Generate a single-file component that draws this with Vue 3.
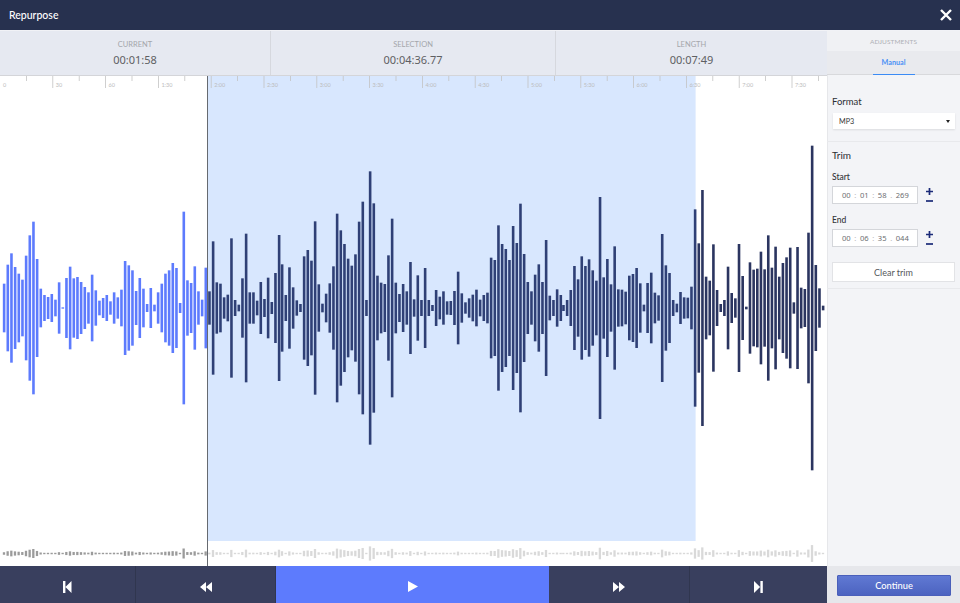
<script setup>
const seg1 = [73,130,164,123,103,85,157,218,259,147,58,39,33,42,25,77,2,90,124,89,93,78,63,47,100,53,22,30,39,20,47,32,55,141,128,113,51,90,58,12,60,10,47,73,103,113,135,120,15,289,83,75,125,50,25,121,50,200,77,73,32,40,209,24,10,89,223,47,47,22,78,27,91,18,105,219]
const seg2 = [131,39,122,62,23,12,155,174,142,260,71,13,43,74,125,283,233,192,148,127,161,259,319,24,410,314,97,76,72,158,268,76,42,72,50,138,26,98,24,120,24,9,54,34,50,20,21,51,109,44,17,29,40,55,25,39,46,151,144,248,192,177,144,246,195,313,162,78,50,100,131,78,204,37,24,56,39]
const seg3 = [9,24,54,126,86,155,126,146,113,82,333,92,147,71,185,56,55,49,97,102,120,74,10,75,106,46,38,222,128,105,24,13,48,32,31,64,296,194,354,94,82,191,54,12,24,124,45,29,192,96,4,137,115,118,169,116,218,121,184,94,135,152,181,17,183,61,57,226,487,129,59,7]
const colorOf = (x) => (x < 207 ? '#5d7bfd' : x < 696 ? '#2f4076' : '#2b3560')
const place = (list, from, to) => list.map((v, i) => {
  const x = from + (i * (to - from)) / (list.length - 1)
  return {
    x: x - 1.5,
    h: v / 3,
    fill: colorOf(x),
    mini: Math.max(0.7, (v / 3) * 0.052),
    miniFill: x < 207 ? '#9b9b9b' : '#d9d9d9',
  }
})
const bars = [...place(seg1, 4.33, 279.33), ...place(seg2, 282.33, 561), ...place(seg3, 563.67, 823.33)]
const labels = ['0','30','60','1:30','2:00','2:30','3:00','3:30','4:00','4:30','5:00','5:30','6:00','6:30','7:00','7:30']
const ticks = Array.from({ length: 32 }, (_, i) => ({ x: i * 26.4, major: i % 2 === 0 })).filter((t) => t.x > 0)
const stats = [
  { label: 'CURRENT', value: '00:01:58', cls: 'w1' },
  { label: 'SELECTION', value: '00:04:36.77', cls: 'w2' },
  { label: 'LENGTH', value: '00:07:49', cls: 'w3' },
]
const trims = [
  { label: 'Start', parts: ['00', '01', '58', '269'] },
  { label: 'End', parts: ['00', '06', '35', '044'] },
]
</script>

<template>
  <div class="app">
    <header class="top">
      <span class="title">Repurpose</span>
      <svg class="close" width="12" height="12" viewBox="0 0 12 12"><path d="M1 1L11 11M11 1L1 11" stroke="#fff" stroke-width="2.4" fill="none"/></svg>
    </header>
    <div class="body">
      <main class="main">
        <div class="stats">
          <div v-for="s in stats" :key="s.label" class="stat" :class="s.cls">
            <div class="stat-label">{{ s.label }}</div>
            <div class="stat-value">{{ s.value }}</div>
          </div>
        </div>
        <div class="stage">
          <svg class="wave" width="827" height="465" viewBox="0 0 827 465">
            <rect x="208" y="0" width="487.6" height="465" fill="#d8e7fe"/>
            <rect v-for="t in ticks" :key="t.x" :x="t.x - 0.4" y="0" width="0.8" :height="t.major ? 12 : 5" fill="#c4c4c4"/>
            <text v-for="(l, i) in labels" :key="l" :x="i * 52.8 + 3" y="11" class="tick-label">{{ l }}</text>
            <rect v-for="(b, i) in bars" :key="i" :x="b.x" :y="232 - b.h" width="2.6" :height="b.h * 2" :fill="b.fill"/>
          </svg>
          <svg class="mini" width="827" height="25" viewBox="0 0 827 25">
            <rect v-for="(b, i) in bars" :key="i" :x="b.x" :y="12.5 - b.mini" width="2.3" :height="b.mini * 2" :fill="b.miniFill"/>
          </svg>
          <div class="playhead"></div>
        </div>
        <div class="transport">
          <button class="tbtn b1"><svg width="9" height="12" viewBox="0 0 9 12"><path d="M0 0H2.4V12H0ZM8.5 0V12L2.4 6Z" fill="#fff"/></svg></button>
          <button class="tbtn b2"><svg width="12" height="10" viewBox="0 0 12 10"><path d="M6 0V10L0 5ZM12 0V10L6 5Z" fill="#fff"/></svg></button>
          <button class="tbtn play"><svg width="10" height="11" viewBox="0 0 10 11"><path d="M0 0L10 5.5L0 11Z" fill="#fff"/></svg></button>
          <button class="tbtn b4"><svg width="12" height="10" viewBox="0 0 12 10"><path d="M0 0L6 5L0 10ZM6 0L12 5L6 10Z" fill="#fff"/></svg></button>
          <button class="tbtn b5"><svg width="9" height="12" viewBox="0 0 9 12"><path d="M0 0L6.1 6L0 12ZM6.4 0H8.8V12H6.4Z" fill="#fff"/></svg></button>
        </div>
      </main>
      <aside class="side">
        <div class="adj">ADJUSTMENTS</div>
        <div class="tabrow"><span class="tab">Manual</span></div>
        <section class="format">
          <h3 class="h h-format">Format</h3>
          <div class="select"><span>MP3</span><i class="caret"></i></div>
        </section>
        <section class="trim">
          <h3 class="h">Trim</h3>
          <div v-for="t in trims" :key="t.label" class="trim-row">
            <div class="trim-label">{{ t.label }}</div>
            <div class="trim-line">
              <div class="time">
                <span>{{ t.parts[0] }}</span><em>:</em><span>{{ t.parts[1] }}</span><em>:</em><span>{{ t.parts[2] }}</span><em>.</em><span>{{ t.parts[3] }}</span>
              </div>
              <div class="pm">
                <svg width="7" height="7" viewBox="0 0 7 7"><path d="M3.5 0V7M0 3.5H7" stroke="#1b2a78" stroke-width="1.7"/></svg>
                <svg width="7" height="2" viewBox="0 0 7 2"><path d="M0 1H7" stroke="#1b2a78" stroke-width="1.7"/></svg>
              </div>
            </div>
          </div>
          <button class="clear">Clear trim</button>
        </section>
        <div class="spacer"></div>
        <div class="foot"><button class="cont">Continue</button></div>
      </aside>
    </div>
  </div>
</template>

<style scoped>
.app { width: 960px; height: 603px; display: flex; flex-direction: column; overflow: hidden; font-family: Lato, "Noto Sans", sans-serif; background: #fff; }
.top { height: 30px; flex: none; background: #27314f; display: flex; align-items: center; justify-content: space-between; padding: 0 8px 0 9px; }
.title { color: #fff; font-size: 10.5px; font-weight: 500; }
.close { display: block; }
.body { flex: 1; display: flex; min-height: 0; border-top: 1px solid #f1f2f6; }
.main { width: 827px; flex: none; display: flex; flex-direction: column; }
.stats { height: 45px; flex: none; display: flex; background: #e6e9f1; border-bottom: 1px solid #d4d5d9; box-sizing: border-box; }
.stat { display: flex; flex-direction: column; align-items: center; padding-top: 8px; box-sizing: border-box; }
.w1 { width: 271px; border-right: 1px solid #d6d8de; }
.w2 { width: 285px; border-right: 1px solid #d6d8de; }
.w3 { width: 271px; }
.stat-label { font-size: 7.5px; line-height: 12px; color: #a4a6ab; }
.stat-value { font-family: "Noto Sans", sans-serif; font-size: 11px; line-height: 16px; margin-top: 1px; color: #5e6063; }
.stage { position: relative; flex: 1; display: flex; flex-direction: column; min-height: 0; }
.wave, .mini { display: block; flex: none; }
.tick-label { font-size: 5.5px; fill: #bcbcbc; }
.playhead { position: absolute; left: 207px; top: 0; bottom: 0; width: 1px; background: #666a70; }
.transport { height: 37px; flex: none; display: flex; background: #393f5e; }
.tbtn { border: 0; padding: 4px 0 0; margin: 0; background: transparent; display: flex; align-items: center; justify-content: center; border-right: 1px solid #30364f; box-sizing: border-box; }
.tbtn svg { display: block; }
.b1 { width: 136px; }
.b2 { width: 140px; }
.play { width: 273px; background: #5d7bfd; border-right: 0; }
.b4 { width: 141px; }
.b5 { width: 137px; border-right: 0; }
.side { flex: 1; display: flex; flex-direction: column; background: #f3f4f7; box-shadow: inset 1px 0 0 #e6e7ea; }
.adj { height: 20px; flex: none; background: #f0f1f4; text-align: center; font-size: 6.5px; line-height: 21px; color: #aeb0b4; letter-spacing: 0.1px; }
.tabrow { height: 24px; flex: none; background: #e9eaee; border-bottom: 1px solid #d8d9dc; display: flex; justify-content: center; box-sizing: border-box; }
.tab { width: 42px; text-align: center; font-size: 7.2px; font-weight: 700; line-height: 24px; height: 24px; box-sizing: border-box; color: #4a90f5; border-bottom: 1px solid #3b8bf5; }
.format { padding: 20px 5px 12px 5px; border-bottom: 1px solid #e8e9ec; }
.h { margin: 0; font-size: 10px; line-height: 14px; font-weight: 400; color: #2c2e33; }
.h-format { font-size: 9.5px; }
.select { margin: 4px 0 0 1px; height: 16px; width: 122px; background: #fff; box-shadow: 0 1px 2px rgba(0,0,0,.1); display: flex; align-items: center; justify-content: space-between; padding: 0 5px 0 6px; box-sizing: border-box; font-size: 7.2px; color: #333; }
.caret { width: 0; height: 0; border-left: 2.5px solid transparent; border-right: 2.5px solid transparent; border-top: 3px solid #222; }
.trim { padding: 6px 4px 6px 5px; border-bottom: 1px solid #e8e9ec; }
.trim-row { margin-top: 10px; }
.trim-row + .trim-row { margin-top: 11px; }
.trim-label { font-size: 8.5px; line-height: 11px; font-weight: 500; color: #33353a; }
.trim-line { display: flex; align-items: center; margin-top: 3px; }
.time { width: 86px; height: 18px; box-sizing: border-box; background: #fff; border: 1px solid #d4d6da; display: flex; align-items: center; padding-left: 9px; gap: 3.6px; font-family: "Noto Sans", sans-serif; font-size: 7.6px; color: #6d6f73; }
.time em { font-style: normal; color: #bbb; }
.pm { margin-left: 8px; display: flex; flex-direction: column; align-items: center; gap: 5.5px; }
.pm svg { display: block; }
.clear { margin-top: 15px; width: 123px; height: 20px; padding: 0; display: block; background: #fff; border: 1px solid #e2e3e6; font-family: inherit; font-size: 9px; color: #55575b; }
.spacer { flex: 1; }
.foot { height: 37px; flex: none; background: #e6e7eb; padding: 9px 9px 7px 10px; box-sizing: border-box; }
.cont { width: 114px; height: 21px; padding: 0; display: block; border: 1px solid #4a5fba; border-radius: 1px; background: linear-gradient(#6079d3, #4c63c0); font-family: inherit; font-size: 9.3px; font-weight: 500; color: #fff; }
</style>
